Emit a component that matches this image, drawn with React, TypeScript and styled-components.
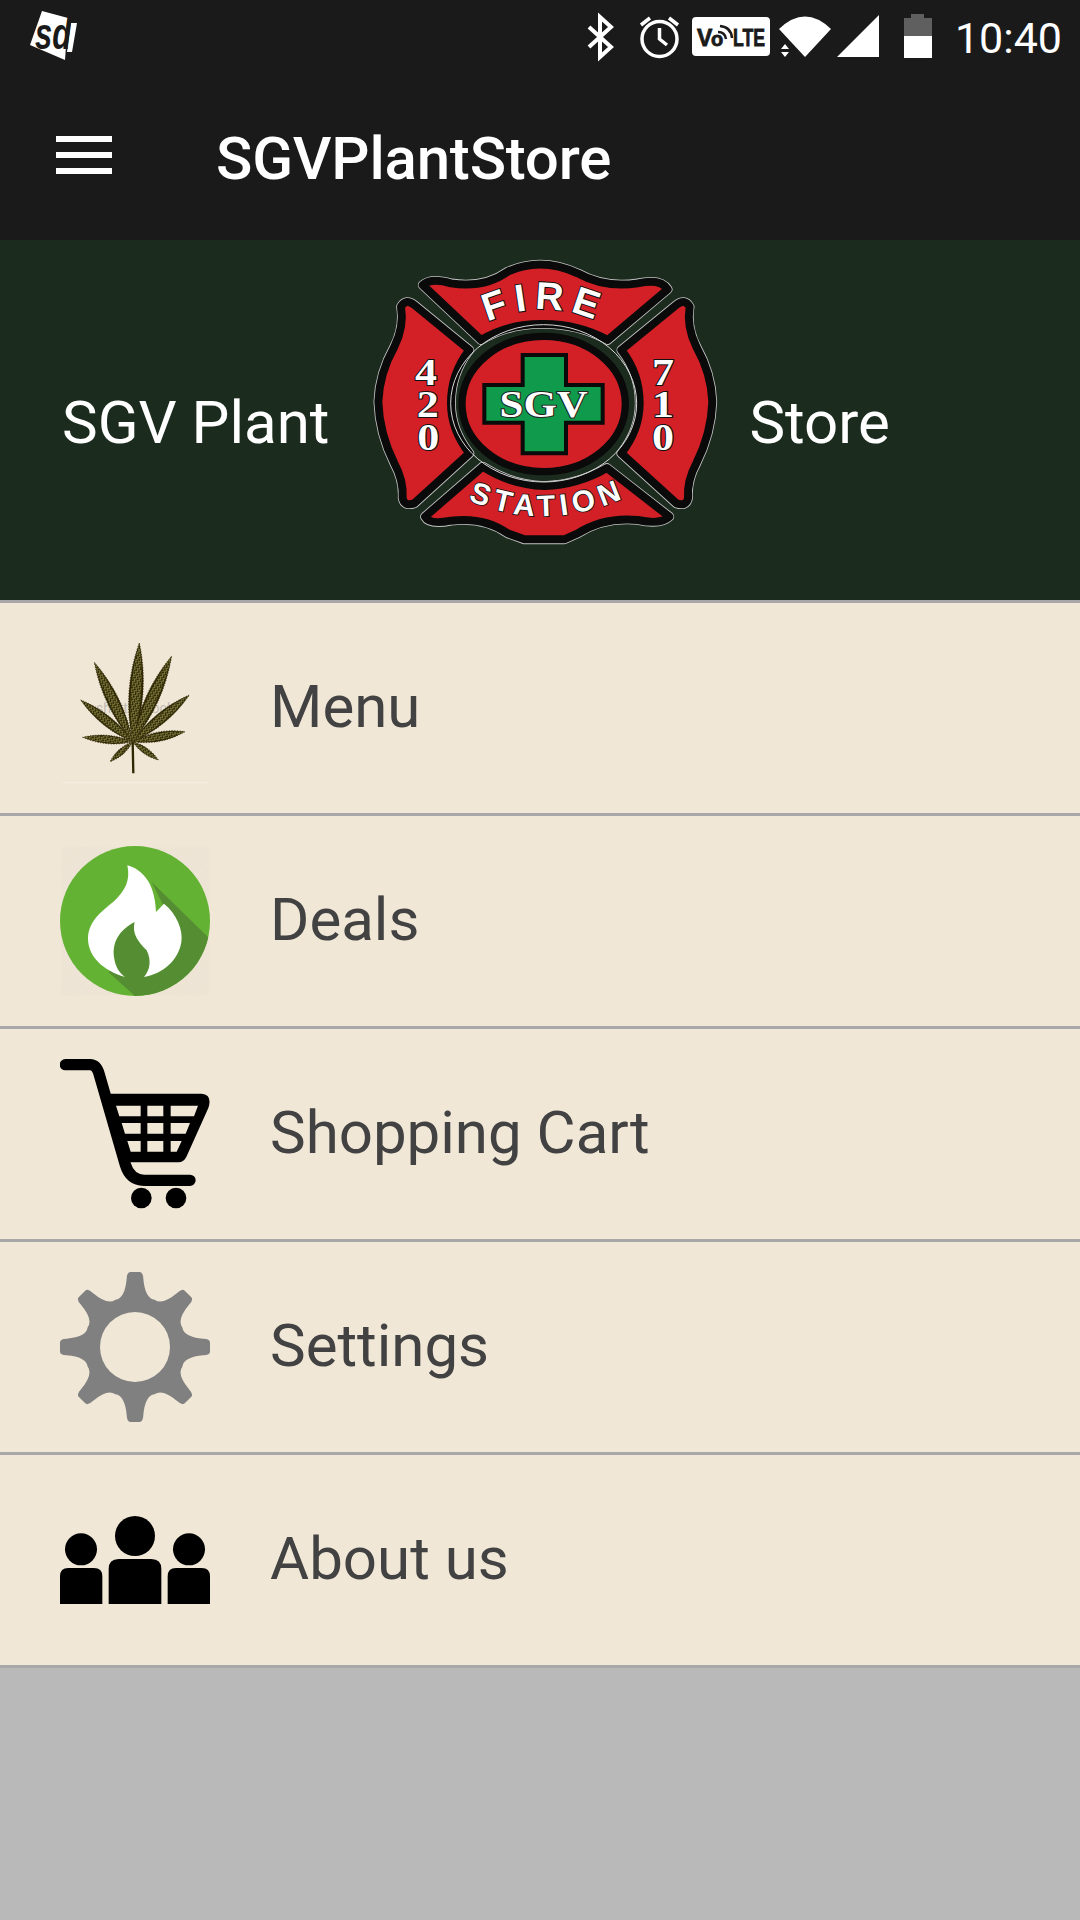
import React from "react";
import styled, { createGlobalStyle } from "styled-components";

const GlobalStyle = createGlobalStyle`
  html, body {
    margin: 0;
    padding: 0;
    background: #b9b9b9;
    font-family: Roboto, "Liberation Sans", sans-serif;
  }
`;

const Page = styled.div`
  width: 1080px;
  height: 1920px;
  display: flex;
  flex-direction: column;
  background: #b9b9b9;
  overflow: hidden;
`;

const StatusBar = styled.div`
  height: 72px;
  display: flex;
  align-items: flex-start;
  padding: 0 18px 0 29px;
  background: #1a1a1a;
`;

const SdLogo = styled.svg`
  width: 50px;
  height: 50px;
  margin-top: 11px;
  margin-right: auto;
  overflow: visible;
`;

const StatusIcon = styled.svg<{ $left: number; $top: number }>`
  display: block;
  margin-left: ${(p) => p.$left}px;
  margin-top: ${(p) => p.$top}px;
  overflow: visible;
`;

const Clock = styled.span`
  margin-left: 23px;
  margin-top: 13px;
  font-size: 43px;
  line-height: 50px;
  color: #fff;
`;

const Toolbar = styled.div`
  height: 168px;
  display: flex;
  align-items: center;
  padding-left: 56px;
  background: #1a1a1a;
  box-sizing: border-box;
`;

const Burger = styled.div`
  width: 56px;
  height: 38px;
  display: flex;
  flex-direction: column;
  justify-content: space-between;
  margin-top: -2px;
`;

const BurgerLine = styled.span`
  height: 6px;
  background: #fff;
`;

const Title = styled.h1`
  margin: 4px 0 0 104px;
  font-size: 60px;
  font-weight: 500;
  letter-spacing: -0.2px;
  color: #fff;
`;

const Header = styled.div`
  height: 360px;
  display: flex;
  padding-left: 62px;
  background: #1b2b1e;
  border-bottom: 3px solid #a8a8a8;
`;

const HeaderText = styled.span`
  align-self: center;
  font-size: 60px;
  color: #fff;
  margin-top: 4px;
`;

const LogoBox = styled.svg`
  width: 380px;
  height: 320px;
  margin: 0 18px 0 22px;
  flex-shrink: 0;
`;

const MenuList = styled.div`
  display: flex;
  flex-direction: column;
`;

const Row = styled.div`
  height: 210px;
  display: flex;
  align-items: center;
  gap: 60px;
  padding-left: 60px;
  background: #f0e7d7;
  border-bottom: 3px solid #a8a8a8;
`;

const RowIcon = styled.svg`
  width: 150px;
  height: 150px;
  flex-shrink: 0;
`;

const RowLabel = styled.span`
  font-size: 60px;
  color: #424242;
  margin-top: -4px;
`;

const leafTips: [number, number, number][] = [
  [298, 68, 42],
  [395, 108, 38],
  [448, 225, 32],
  [435, 335, 28],
  [355, 420, 18],
  [210, 425, 18],
  [128, 352, 25],
  [122, 240, 30],
  [163, 127, 36],
];

function leafPath(tx: number, ty: number, w: number, shrink = 1) {
  const bx = 278;
  const by = 365;
  const dx = tx - bx;
  const dy = ty - by;
  const len = Math.hypot(dx, dy);
  const nx = (-dy / len) * w * shrink;
  const ny = (dx / len) * w * shrink;
  const mx = bx + dx * 0.5;
  const my = by + dy * 0.5;
  return `M${bx} ${by}Q${mx + nx} ${my + ny} ${tx} ${ty}Q${mx - nx} ${my - ny} ${bx} ${by}Z`;
}

function gearPath() {
  const cx = 285;
  const cy = 920;
  const pts = 8;
  let d = "";
  const rot = (x: number, y: number, a: number) => {
    const c = Math.cos(a);
    const s = Math.sin(a);
    return `${(cx + x * c - y * s).toFixed(1)} ${(cy + x * s + y * c).toFixed(1)}`;
  };
  for (let i = 0; i < pts; i++) {
    const a = (i * Math.PI * 2) / pts;
    if (i === 0) d += `M${rot(-59, -142, a)}`;
    d += `Q${rot(-30, -146, a)} ${rot(-25, -205, a)}`;
    d += `Q${rot(-24, -225, a)} ${rot(-14, -225, a)}`;
    d += `L${rot(14, -225, a)}`;
    d += `Q${rot(24, -225, a)} ${rot(25, -205, a)}`;
    d += `Q${rot(30, -146, a)} ${rot(59, -142, a)}`;
  }
  return d + "Z";
}

const LeafIcon = () => (
  <RowIcon viewBox="60 39 450 450">
    <defs>
      <pattern id="fleck" width="10" height="10" patternUnits="userSpaceOnUse" patternTransform="rotate(35)">
        <rect width="10" height="10" fill="#2e2804" />
        <rect x="1" y="1" width="6" height="3" fill="#a8a35c" />
        <rect x="5" y="6" width="5" height="3" fill="#a8a35c" />
      </pattern>
    </defs>
    <text x="285" y="278" textAnchor="middle" fontSize="42" fontFamily="Roboto, sans-serif" fill="#8a8a8a" opacity="0.45">
      shutterstock
    </text>
    {leafTips.map(([x, y, w]) => (
      <path key={`${x}-${y}`} d={leafPath(x, y, w)} fill="#2e2804" stroke="#2e2804" strokeWidth="3" strokeDasharray="3 5" />
    ))}
    {leafTips.map(([x, y, w]) => (
      <path key={`in-${x}-${y}`} d={leafPath(x, y, w, 0.72)} fill="url(#fleck)" />
    ))}
    <path d="M278 365L280 460" stroke="#2e2804" strokeWidth="7" />
    <path d="M66 487H505" stroke="#f8f4eb" strokeWidth="2" />
  </RowIcon>
);

const FlameIcon = () => (
  <RowIcon viewBox="60 677 450 450">
    <defs>
      <pattern id="hatch" width="8" height="8" patternUnits="userSpaceOnUse" patternTransform="rotate(45)">
        <rect width="8" height="8" fill="#ece3d4" />
        <rect width="3" height="8" fill="#f0e7d7" />
      </pattern>
      <clipPath id="disc">
        <circle cx="285" cy="902" r="225" />
      </clipPath>
    </defs>
    <rect x="64" y="681" width="442" height="444" fill="url(#hatch)" />
    <circle cx="285" cy="902" r="225" fill="#64b233" />
    <g clipPath="url(#disc)">
      <path d="M335 785L512 958V1130H288L205 1055L424 965Z" fill="#558e32" />
    </g>
    <path
      d="M284 905C245 925 215 960 222 1010C225 1040 240 1060 255 1075H312C335 1050 335 1015 320 990C295 965 275 940 284 905Z"
      fill="#558e32"
    />
    <path
      d="M262 735C300 745 345 780 348 875L372 850C410 880 430 930 424 965C415 1020 370 1060 312 1070C330 1050 335 1020 320 990C295 965 275 940 284 905C245 925 215 960 222 1010C225 1040 240 1060 255 1070C190 1050 145 1010 144 955C145 900 190 870 225 840C255 810 272 780 262 735Z"
      fill="#fff"
    />
  </RowIcon>
);

const CartIcon = () => (
  <RowIcon viewBox="60 58 450 450">
    <path
      fillRule="evenodd"
      d="M205 162H485Q518 165 505 205L440 350Q432 368 415 368H245ZM228 198H302V230H238ZM322 198H370V230H322ZM392 198H474L462 230H392ZM245 250H302V282H255ZM322 250H370V282H322ZM392 250H450L437 282H392ZM262 304H302V336H272ZM322 304H370V336H322ZM392 304H425L410 336H392Z"
      fill="#000"
    />
    <path d="M76 75H150Q170 75 178 105L256 375Q270 421 312 422H450" fill="none" stroke="#000" strokeWidth="34" strokeLinecap="round" />
    <circle cx="304" cy="475" r="31" fill="#000" />
    <circle cx="408" cy="475" r="31" fill="#000" />
  </RowIcon>
);

const GearIcon = () => (
  <RowIcon viewBox="60 695 450 450">
    <path d={gearPath()} fill="#808080" />
    <circle cx="285" cy="920" r="105" fill="#f0e7d7" />
  </RowIcon>
);

const PeopleIcon = () => (
  <RowIcon viewBox="60 135 450 450">
    <circle cx="285" cy="288" r="60" />
    <path d="M206 492V387Q206 357 236 357H334Q364 357 364 387V492Z" />
    <circle cx="123" cy="328" r="48" />
    <path d="M60 492V409Q60 384 85 384H162Q187 384 187 409V492Z" />
    <circle cx="447" cy="328" r="48" />
    <path d="M383 492V409Q383 384 408 384H485Q510 384 510 409V492Z" />
  </RowIcon>
);

const FireLogo = () => (
  <LogoBox viewBox="0 0 1140 960">
    <defs>
      <path id="fireArc" d="M370 268Q575 148 790 268" />
      <path id="stationArc" d="M330 770Q580 892 850 760" />
      <path id="armLeft" d="M150 200Q165 175 190 195L355 330Q300 400 300 490Q300 570 355 640L190 790Q160 800 155 775Q158 720 130 670Q85 580 82 485Q85 400 130 320Q160 260 150 200Z" />
      <path id="bandTop" d="M215 135Q240 112 300 130Q400 145 470 95Q570 50 680 100Q760 145 860 130Q930 115 950 148L770 300Q680 250 570 252Q470 252 390 300Z" />
      <path id="bandBottom" d="M222 830L395 680Q480 735 580 738Q680 735 768 684L955 830Q930 855 860 840Q760 830 680 880L640 898H520L470 880Q400 830 300 842Q235 855 222 830Z" />
    </defs>
    <g fill="none" stroke="#c4c4c4" strokeWidth="29" strokeLinejoin="round">
      <use href="#bandTop" />
      <use href="#armLeft" />
      <use href="#armLeft" transform="matrix(-1 0 0 1 1166 0)" />
      <use href="#bandBottom" />
    </g>
    <g fill="#d32027" stroke="#0a0a0a" strokeWidth="24" strokeLinejoin="round">
      <use href="#bandTop" />
      <use href="#armLeft" />
      <use href="#armLeft" transform="matrix(-1 0 0 1 1166 0)" />
      <use href="#bandBottom" />
    </g>
    <ellipse cx="578" cy="490" rx="279" ry="236" fill="none" stroke="#d8d8d8" strokeWidth="3" />
    <ellipse cx="578" cy="492" rx="245" ry="203" fill="#d32027" stroke="#0a0a0a" strokeWidth="22" />
    <path d="M515 345H645V435H755V548H645V640H515V548H400V435H515Z" fill="#0f9a4c" stroke="#0a0a0a" strokeWidth="12" />
    <text
      x="578"
      y="530"
      textAnchor="middle"
      fontFamily="'Liberation Serif', serif"
      fontWeight="700"
      fontSize="112"
      fill="#fff"
      stroke="#222"
      strokeWidth="6"
      paintOrder="stroke"
      textLength="265"
      lengthAdjust="spacingAndGlyphs"
    >
      SGV
    </text>
    <text fontFamily="'Liberation Sans', sans-serif" fontWeight="700" fontSize="116" letterSpacing="22" fill="#fff" stroke="#111" strokeWidth="6" paintOrder="stroke">
      <textPath href="#fireArc" startOffset="50%" textAnchor="middle">
        FIRE
      </textPath>
    </text>
    <text fontFamily="'Liberation Sans', sans-serif" fontWeight="700" fontSize="90" letterSpacing="16" fill="#fff" stroke="#111" strokeWidth="5" paintOrder="stroke">
      <textPath href="#stationArc" startOffset="50%" textAnchor="middle">
        STATION
      </textPath>
    </text>
    <g fontFamily="'Liberation Serif', serif" fontWeight="700" fontSize="112" fill="#fff" stroke="#111" strokeWidth="6" paintOrder="stroke" textAnchor="middle">
      <text x="225" y="434" textLength="66" lengthAdjust="spacingAndGlyphs">4</text>
      <text x="230" y="532" textLength="66" lengthAdjust="spacingAndGlyphs">2</text>
      <text x="232" y="630" textLength="66" lengthAdjust="spacingAndGlyphs">0</text>
      <text x="936" y="434" textLength="66" lengthAdjust="spacingAndGlyphs">7</text>
      <text x="936" y="532" textLength="66" lengthAdjust="spacingAndGlyphs">1</text>
      <text x="936" y="630" textLength="66" lengthAdjust="spacingAndGlyphs">0</text>
    </g>
  </LogoBox>
);

const menuItems = [
  { label: "Menu", icon: <LeafIcon /> },
  { label: "Deals", icon: <FlameIcon /> },
  { label: "Shopping Cart", icon: <CartIcon /> },
  { label: "Settings", icon: <GearIcon /> },
  { label: "About us", icon: <PeopleIcon /> },
];

const App = () => {
  return (
    <Page>
      <GlobalStyle />
      <StatusBar>
        <SdLogo viewBox="0 0 50 50">
          <polygon points="13,0 39,7 36,49 1,34" fill="#fff" />
          <polygon points="42,12 48,12 43,41 38,41" fill="#fff" />
          <text
            x="6"
            y="38"
            fontFamily="'Liberation Sans', sans-serif"
            fontStyle="italic"
            fontWeight="700"
            fontSize="44"
            fill="#1a1a1a"
            textLength="36"
            lengthAdjust="spacingAndGlyphs"
          >
            sd
          </text>
        </SdLogo>
        <StatusIcon $left={0} $top={15} width="26" height="44" viewBox="0 0 26 44" fill="none" stroke="#fff" strokeWidth="4">
          <path d="M2 12L24 32L13 42V2L24 12L2 32" />
        </StatusIcon>
        <StatusIcon $left={26} $top={15} width="41" height="43" viewBox="0 0 41 43" fill="none" stroke="#fff" strokeWidth="3.5">
          <circle cx="20.5" cy="24" r="17.5" />
          <path d="M20.5 13V24L28 30M2 10L11 3M39 10L30 3" />
        </StatusIcon>
        <StatusIcon $left={12} $top={17} width="78" height="39" viewBox="0 0 78 39">
          <rect width="78" height="39" rx="4" fill="#fff" />
          <g fontFamily="'Liberation Sans', sans-serif" fontWeight="700" fill="#1a1a1a" stroke="#1a1a1a" strokeWidth="0.8">
            <text x="5" y="29" fontSize="23">V</text>
            <text x="19" y="29" fontSize="20">o</text>
            <text x="41" y="29" fontSize="23" textLength="32" lengthAdjust="spacingAndGlyphs">LTE</text>
          </g>
          <path d="M26 15Q33 15 34 22M28 9Q39 10 40 21" fill="none" stroke="#1a1a1a" strokeWidth="2.5" />
        </StatusIcon>
        <StatusIcon $left={9} $top={16} width="52" height="42" viewBox="0 0 52 42" fill="#fff">
          <path d="M0 13Q26 -12 52 13L26 41Z" />
          <path d="M6 28L10 33H2ZM6 41L2 36H10Z" />
        </StatusIcon>
        <StatusIcon $left={6} $top={15} width="42" height="42" viewBox="0 0 42 42" fill="#fff">
          <path d="M0 42L42 0V42Z" />
        </StatusIcon>
        <StatusIcon $left={25} $top={14} width="28" height="44" viewBox="0 0 28 44">
          <path d="M7 0H20V4H28V22H0V4H7Z" fill="#5f5f5f" />
          <rect y="22" width="28" height="22" fill="#fff" />
        </StatusIcon>
        <Clock>10:40</Clock>
      </StatusBar>
      <Toolbar>
        <Burger>
          <BurgerLine />
          <BurgerLine />
          <BurgerLine />
        </Burger>
        <Title>SGVPlantStore</Title>
      </Toolbar>
      <Header>
        <HeaderText>SGV Plant</HeaderText>
        <FireLogo />
        <HeaderText>Store</HeaderText>
      </Header>
      <MenuList>
        {menuItems.map((item) => (
          <Row key={item.label}>
            {item.icon}
            <RowLabel>{item.label}</RowLabel>
          </Row>
        ))}
      </MenuList>
    </Page>
  );
};

export default App;
